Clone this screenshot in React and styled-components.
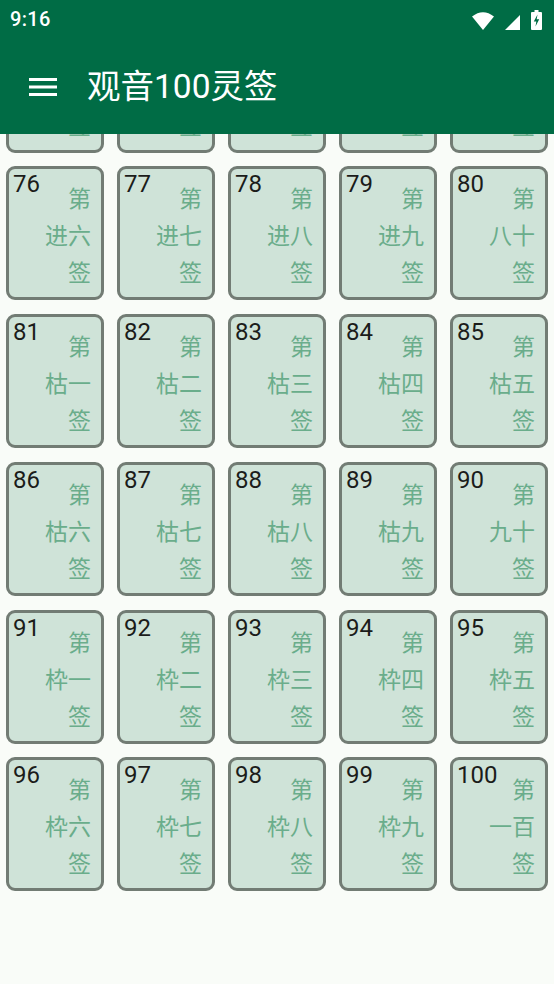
import React, { useLayoutEffect, useRef } from 'react'
import styled, { createGlobalStyle } from 'styled-components'

const GlobalStyle = createGlobalStyle`
    html, body {
        margin:0;
        padding:0;
        background:#F9FCF8;
    }
    body {
        font-family:Roboto, "Noto Sans CJK SC", sans-serif;
    }
`

const DIGITS = ['', '一', '二', '三', '四', '五', '六', '七', '八', '九']
const TENS = ['', '十', '廿', '卅', '卌', '圩', '圆', '进', '枯', '枠']

// label shown under "第" for each lot number
const lotName = (n) => {
    if (n === 100) return '一百'
    const t = Math.floor(n / 10)
    const o = n % 10
    if (o === 0) return DIGITS[t] + '十'
    return TENS[t] + DIGITS[o]
}

const lots = Array.from({ length: 100 }, (_, i) => ({ num: i + 1, name: lotName(i + 1) }))

function WifiIcon() {
    return (
        <svg width="22" height="18" viewBox="0 0 22 18">
            <path d="M0 4.5 Q11 -4 22 4.5 L11 18 Z" fill="white" />
        </svg>
    )
}

function SignalIcon() {
    return (
        <svg width="15" height="15" viewBox="0 0 15 15">
            <path d="M15 0 L15 15 L0 15 Z" fill="white" />
        </svg>
    )
}

function BatteryIcon() {
    return (
        <svg width="11" height="20" viewBox="0 0 11 20">
            <rect x="3.5" y="0" width="4" height="2" fill="white" />
            <rect x="0" y="2" width="11" height="18" rx="1" fill="white" />
            <path d="M6.5 4.5 L2.8 11.5 L5.3 11.5 L4.5 16.5 L8.2 9.3 L5.7 9.3 Z" fill="#006C45" />
        </svg>
    )
}

function MenuIcon() {
    return (
        <svg width="28" height="18" viewBox="0 0 28 18">
            <rect x="0" y="0" width="28" height="3" fill="white" />
            <rect x="0" y="7.5" width="28" height="3" fill="white" />
            <rect x="0" y="15" width="28" height="3" fill="white" />
        </svg>
    )
}

function App() {
    const listRef = useRef(null)

    useLayoutEffect(() => {
        const el = listRef.current
        if (el) el.scrollTop = el.scrollHeight
    }, [])

    return (
        <Screen>
            <GlobalStyle />
            <Header>
                <StatusBar>
                    <Clock>9:16</Clock>
                    <StatusIcons>
                        <WifiIcon />
                        <SignalIcon />
                        <BatteryIcon />
                    </StatusIcons>
                </StatusBar>
                <Toolbar>
                    <MenuButton>
                        <MenuIcon />
                    </MenuButton>
                    <Title>观音100灵签</Title>
                </Toolbar>
            </Header>
            <LotList ref={listRef}>
                <LotGrid>
                    {lots.map((lot) => (
                        <LotCard key={lot.num}>
                            <LotNumber>{lot.num}</LotNumber>
                            <LotText>
                                <div>第</div>
                                <div>{lot.name}</div>
                                <div>签</div>
                            </LotText>
                        </LotCard>
                    ))}
                </LotGrid>
            </LotList>
        </Screen>
    )
}

export default App


const Screen = styled.div`
    width:554px;
    height:984px;
    display:flex;
    flex-direction:column;
    background:#F9FCF8;
    overflow:hidden;
`

const Header = styled.div`
    background:#006C45;
    color:white;
    height:134px;
    flex-shrink:0;
    display:flex;
    flex-direction:column;
    position:relative;
    z-index:1;
`

const StatusBar = styled.div`
    height:38px;
    display:flex;
    align-items:center;
    justify-content:space-between;
    padding:0 12px 0 10px;
`

const Clock = styled.div`
    font-family:Roboto, sans-serif;
    font-size:20px;
    font-weight:500;
    letter-spacing:0.3px;
`

const StatusIcons = styled.div`
    display:flex;
    align-items:flex-end;
    gap:11px;
    padding-top:2px;
`

const Toolbar = styled.div`
    flex:1;
    display:flex;
    align-items:center;
    padding-top:2px;
`

const MenuButton = styled.div`
    width:28px;
    height:18px;
    margin-left:29px;
    margin-right:30px;
    display:flex;
    cursor:pointer;
`

const Title = styled.div`
    font-family:Roboto, "Noto Sans CJK SC", sans-serif;
    font-size:33.5px;
    line-height:40px;
`

const LotList = styled.div`
    flex:1;
    min-height:0;
    overflow:hidden;
`

const LotGrid = styled.div`
    display:grid;
    grid-template-columns:repeat(5, 98px);
    column-gap:13px;
    row-gap:13.75px;
    padding:6px 6px 93px;
`

/* number and label share one cell: number top-left, label right-aligned */
const LotCard = styled.div`
    box-sizing:border-box;
    height:134px;
    background:#CFE3D8;
    border:3px solid #727C74;
    border-radius:9px;
    display:grid;
    grid-template-columns:1fr;
    grid-template-rows:1fr;
    padding:0 10px 0 4px;
    cursor:pointer;

    & > * {
        grid-area:1 / 1;
    }
`

const LotNumber = styled.div`
    justify-self:start;
    align-self:start;
    font-family:Roboto, sans-serif;
    font-size:24px;
    line-height:30px;
    color:#1B1C1A;
`

const LotText = styled.div`
    justify-self:end;
    align-self:start;
    padding-top:10px;
    text-align:right;
    font-family:"Noto Sans CJK SC", sans-serif;
    font-size:23px;
    line-height:37px;
    color:#6AAD8B;
    white-space:nowrap;
`
